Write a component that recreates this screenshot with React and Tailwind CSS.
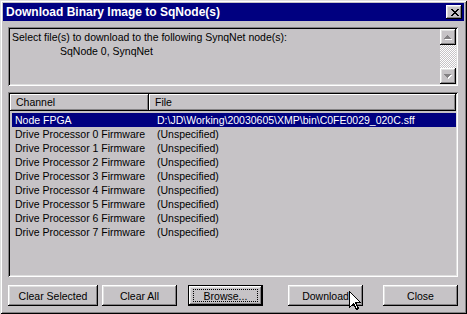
const raised =
  "shadow-[inset_-1px_-1px_#000,inset_1px_1px_#fff,inset_-2px_-2px_#848284,inset_2px_2px_#dfdfdf]";
const sunken =
  "shadow-[inset_1px_1px_#848284,inset_-1px_-1px_#fff,inset_2px_2px_#000,inset_-2px_-2px_#dfdfdf]";

function Px({ pts, fill }) {
  return pts.map(([x, y, w], i) => (
    <rect key={i} x={x} y={y} width={w} height={1} fill={fill} />
  ));
}

function CloseGlyph() {
  const p = [
    [0, 0, 2], [6, 0, 2],
    [1, 1, 2], [5, 1, 2],
    [2, 2, 4],
    [3, 3, 2],
    [2, 4, 4],
    [1, 5, 2], [5, 5, 2],
    [0, 6, 2], [6, 6, 2],
  ];
  return (
    <svg width="8" height="7" shapeRendering="crispEdges">
      <Px pts={p} fill="#000" />
    </svg>
  );
}

function Arrow({ up }) {
  const rows = up
    ? [[7, 6, 1], [6, 7, 3], [5, 8, 5], [4, 9, 7]]
    : [[4, 6, 7], [5, 7, 5], [6, 8, 3], [7, 9, 1]];
  const sh = rows.map(([x, y, w]) => [x + 1, y + 1, w]);
  return (
    <svg width="16" height="16" shapeRendering="crispEdges" className="block">
      <Px pts={sh} fill="#fff" />
      <Px pts={rows} fill="#848284" />
    </svg>
  );
}

function Btn({ children, className = "", def = false }) {
  if (def) {
    return (
      <div className={`relative h-[21px] border border-black bg-[#c6c3c6] ${className}`}>
        <div className={`h-full w-full flex items-center justify-center ${raised}`}>
          {children}
        </div>
        <div className="absolute left-[4px] right-[4px] top-[3px] bottom-[3px] border border-dotted border-black" />
      </div>
    );
  }
  return (
    <div className={`h-[21px] flex items-center justify-center bg-[#c6c3c6] ${raised} ${className}`}>
      {children}
    </div>
  );
}

export default function App() {
  const path = "D:\\JD\\Working\\20030605\\XMP\\bin\\C0FE0029_020C.sff";
  const rows = [["Node FPGA", path, true]];
  for (let i = 0; i < 8; i++) rows.push([`Drive Processor ${i} Firmware`, "(Unspecified)", false]);

  return (
    <div className="relative w-[467px] h-[314px] bg-[#c6c3c6] p-[3px] overflow-hidden text-black font-['Liberation_Sans',Arial,sans-serif] text-[10.5px] leading-[14px] shadow-[inset_1px_1px_#dfdfdf,inset_-1px_-1px_#000,inset_2px_2px_#fff,inset_-2px_-2px_#848284]">
      {/* Title bar */}
      <div className="h-[18px] bg-[#000080] flex items-center justify-between pl-[3px] pr-[2px]">
        <span className="text-white font-bold text-[12px] leading-[18px]">
          Download Binary Image to SqNode(s)
        </span>
        <div className={`w-[16px] h-[14px] bg-[#c6c3c6] flex items-center justify-center pl-[1px] ${raised}`}>
          <CloseGlyph />
        </div>
      </div>

      <div className="px-[5px] pt-[6px]">
        {/* message panel */}
        <div className={`w-[450px] h-[59px] p-[2px] flex ${sunken}`}>
          <div className="flex-1 pl-[2px] pt-[1px]">
            <div>Select file(s) to download to the following SynqNet node(s):</div>
            <div className="pl-[48px]">SqNode 0, SynqNet</div>
          </div>
          <div className="w-[16px] flex flex-col">
            <div className={`h-[16px] bg-[#c6c3c6] ${raised}`}>
              <Arrow up />
            </div>
            <div className="flex-1 bg-[repeating-conic-gradient(#fff_0_25%,#c6c3c6_0_50%)] bg-[length:2px_2px]" />
            <div className={`h-[16px] bg-[#c6c3c6] ${raised}`}>
              <Arrow />
            </div>
          </div>
        </div>

        {/* list */}
        <div className={`mt-[6px] w-[450px] h-[185px] p-[2px] ${sunken}`}>
          <div className="h-[17px] flex">
            <div className="w-[139px] pl-[6px] leading-[16px] shadow-[inset_-1px_-1px_#000,inset_1px_1px_#fff,inset_-2px_-2px_#848284]">
              Channel
            </div>
            <div className="flex-1 pl-[6px] leading-[16px] shadow-[inset_-1px_-1px_#000,inset_1px_1px_#fff,inset_-2px_-2px_#848284]">
              File
            </div>
          </div>
          <div className="pt-[2px] pl-[2px]">
            {rows.map(([c, f, sel]) => (
              <div
                key={c}
                className={`h-[14px] flex whitespace-nowrap ${sel ? "bg-[#000080] text-white" : ""}`}
              >
                <div className="w-[137px] pl-[3px]">{c}</div>
                <div className="pl-[8px]">{f}</div>
              </div>
            ))}
          </div>
        </div>

        {/* buttons */}
        <div className="mt-[8px] flex">
          <Btn className="w-[90px]">Clear Selected</Btn>
          <Btn className="w-[75px] ml-[4px]">Clear All</Btn>
          <Btn className="w-[75px] ml-[11px]" def>
            Browse...
          </Btn>
          <Btn className="w-[75px] ml-[25px]">Download</Btn>
          <Btn className="w-[75px] ml-[20px]">Close</Btn>
        </div>
      </div>

      {/* mouse cursor */}
      <svg
        className="absolute left-[349px] top-[291px]"
        width="13"
        height="20"
        shapeRendering="crispEdges"
      >
        <polygon
          points="0.5,0.5 0.5,16.5 4.5,12.5 7.5,18.5 9.5,17.5 6.5,11.5 11.5,11.5"
          fill="#fff"
          stroke="#000"
          strokeWidth="1"
        />
      </svg>
    </div>
  );
}
